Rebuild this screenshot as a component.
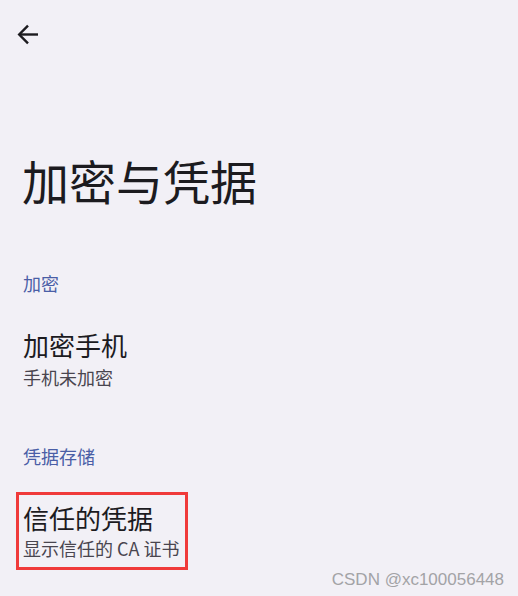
const CJK = { fontFamily: '"Noto Sans CJK SC", Roboto, "Noto Sans", sans-serif' };

function BackArrow() {
  return (
    <svg width="21" height="21" viewBox="0 0 21 21" fill="none" stroke="#1c1b1f" strokeWidth="2.4">
      <path d="M21 10.5H2.5" />
      <path d="M11 1.7L2.2 10.5L11 19.3" strokeLinejoin="miter" />
    </svg>
  );
}

function Section({ label, top }: { label: string; top: string }) {
  return (
    <div className={`px-[23px] ${top} text-[18px] leading-[26px] text-[#4a5ea6]`}>{label}</div>
  );
}

export default function App() {
  return (
    <div className="relative w-[518px] h-[596px] bg-[#f2f0f6] overflow-hidden" style={CJK}>
      <div className="h-[70px] pt-[24px] pl-[17px]">
        <BackArrow />
      </div>
      <div className="px-[22px] pt-[78px] pb-[42px] text-[47px] leading-[64px] text-[#1c1b1f]">加密与凭据</div>

      <Section label="加密" top="pt-[16px]" />
      <div className="px-[23px] pt-[32px]">
        <div className="text-[26px] leading-[34px] text-[#1c1b1f]">加密手机</div>
        <div className="mt-[2px] text-[18px] leading-[26px] text-[#49454f]">手机未加密</div>
      </div>

      <Section label="凭据存储" top="pt-[53px]" />
      <div className="px-[16px] pt-[23px]">
        <div className="w-[172px] border-[3px] border-[#f03a3a] pl-[4px] pt-[6px] pb-[6px]">
          <div className="text-[26px] leading-[34px] text-[#1c1b1f]">信任的凭据</div>
          <div className="text-[18px] leading-[26px] text-[#49454f] whitespace-nowrap">显示信任的 CA 证书</div>
        </div>
      </div>

      <div
        className="absolute right-[14px] bottom-[6px] text-[17px] leading-[20px] text-[#a3a3a6]"
        style={{ fontFamily: '"Liberation Sans", Arial, sans-serif' }}
      >
        CSDN @xc100056448
      </div>
    </div>
  );
}
